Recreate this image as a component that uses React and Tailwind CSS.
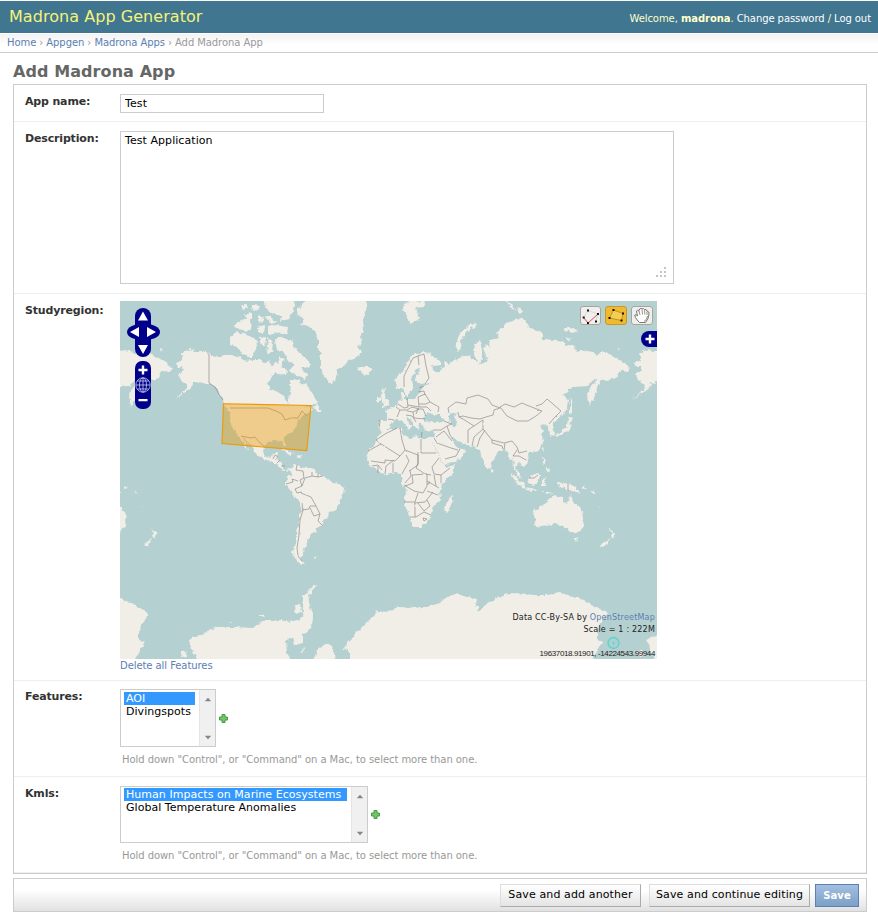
import React from "react";

const LAND = [
  // North and Central America
  "M190 349 L196 351 L203 351 L209 354 L215 357 L220 356 L226 355 L233 355 L240 357 L247 361 L254 360 L260 360 L264 363 L268 362 L273 366 L278 361 L280 356 L284 360 L281 367 L286 370 L286 376 L280 375 L276 373 L272 376 L268 383 L271 389 L277 392 L283 395 L286 401 L288 404 L289 398 L291 393 L290 387 L290 379 L294 379 L300 381 L302 385 L306 383 L309 389 L313 394 L318 402 L312 405 L305 407 L311 408 L313 410 L308 413 L303 415 L299 421 L297 426 L292 432 L284 437 L284 441 L287 447 L284 447 L281 441 L274 440 L267 442 L264 446 L263 452 L266 457 L271 458 L273 453 L278 453 L276 458 L277 461 L283 463 L282 468 L286 470 L291 469 L288 472 L281 469 L277 464 L272 461 L263 459 L257 455 L253 448 L246 440 L243 438 L249 449 L247 449 L242 442 L240 438 L237 433 L232 427 L230 420 L230 413 L225 406 L224 402 L220 393 L215 387 L208 384 L198 382 L193 383 L192 388 L183 394 L174 399 L181 394 L187 388 L187 384 L180 380 L178 375 L184 370 L183 367 L178 367 L176 363 L183 360 L181 353 Z",
  // Greenland
  "M307 300 L303 303 L300 307 L297 311 L298 316 L304 319 L301 325 L310 327 L315 331 L318 340 L318 348 L322 354 L320 358 L320 367 L325 378 L332 384 L335 381 L338 369 L344 366 L348 361 L357 358 L361 352 L357 346 L362 344 L360 338 L364 331 L363 320 L366 312 L367 300 Z",
  // Iceland
  "M358 368 L362 366 L368 366 L372 370 L366 375 L361 373 Z",
  // Baffin and the Arctic islands
  "M275 340 L280 337 L291 340 L294 347 L303 355 L310 363 L309 368 L303 366 L301 370 L307 374 L306 379 L299 376 L289 371 L294 365 L289 361 L284 353 L277 350 Z",
  "M263 300 L295 300 L293 310 L289 319 L281 321 L282 316 L273 314 L265 307 Z",
  "M268 327 L275 325 L288 327 L287 334 L268 333 Z",
  "M265 316 L272 318 L277 322 L270 324 Z",
  "M257 327 L265 325 L264 334 L258 332 Z M245 313 L252 313 L252 320 L246 321 Z M252 305 L260 306 L258 311 L252 309 Z M258 315 L264 317 L262 322 L258 321 Z M241 306 L246 303 L248 308 L243 310 Z",
  "M230 337 L237 332 L247 335 L258 340 L257 350 L250 358 L242 354 L238 347 L230 345 Z",
  "M233 327 L242 320 L248 317 L253 327 L247 332 L237 328 Z",
  "M259 338 L266 337 L265 347 L259 344 Z M268 337 L273 342 L272 352 L267 354 L268 346 Z",
  "M281 367 L287 370 L286 375 L280 373 Z",
  "M314 407 L317 403 L319 407 L322 412 L316 412 Z",
  // Caribbean
  "M281 450 L288 450 L295 454 L290 455 Z M297 455 L303 457 L297 458 Z",
  // South America
  "M290 469 L294 466 L297 465 L300 467 L305 468 L312 468 L315 472 L323 475 L327 480 L333 482 L341 485 L345 488 L344 493 L340 500 L339 506 L337 509 L329 513 L327 518 L323 523 L319 528 L315 527 L317 532 L310 535 L310 538 L306 540 L307 545 L304 549 L303 554 L300 558 L305 564 L298 563 L295 558 L293 552 L296 543 L298 525 L300 513 L301 503 L295 498 L290 490 L286 485 L287 478 L292 475 Z",
  "M313 556 L316 557 L314 559 Z",
  // Europe and Asia
  "M395 380 L397 375 L403 372 L407 363 L413 355 L423 352 L429 353 L434 357 L441 361 L441 365 L434 366 L431 364 L433 370 L438 373 L440 368 L445 366 L444 362 L450 364 L452 361 L463 357 L470 355 L472 360 L477 362 L474 354 L475 344 L480 340 L482 350 L482 359 L478 365 L485 363 L487 358 L484 351 L485 344 L489 347 L490 340 L499 338 L496 333 L503 328 L507 323 L520 318 L525 320 L527 326 L533 330 L542 332 L542 339 L553 340 L563 342 L565 346 L572 345 L578 352 L583 350 L592 352 L597 355 L600 353 L607 353 L615 357 L625 363 L630 368 L627 372 L620 371 L617 378 L607 381 L601 379 L597 388 L594 398 L589 406 L587 397 L590 388 L597 380 L593 380 L588 386 L573 387 L563 395 L568 400 L567 409 L561 416 L552 423 L554 434 L550 436 L549 428 L545 424 L540 427 L545 430 L541 434 L544 440 L540 449 L532 453 L527 453 L528 463 L523 467 L518 463 L516 466 L518 472 L522 478 L518 476 L514 468 L513 458 L510 460 L508 452 L503 449 L499 452 L492 462 L490 469 L487 470 L482 456 L479 451 L475 447 L467 445 L460 442 L452 437 L453 443 L458 447 L465 450 L462 457 L452 462 L444 465 L441 460 L435 447 L432 440 L434 435 L433 430 L425 431 L422 424 L420 423 L419 430 L415 428 L410 419 L406 417 L409 423 L412 426 L409 430 L403 422 L398 419 L392 421 L390 428 L383 431 L378 429 L378 420 L388 420 L388 413 L384 410 L389 409 L396 406 L398 401 L402 399 L401 393 L404 393 L404 399 L415 399 L419 393 L424 386 L432 383 L418 384 L415 378 L420 369 L416 369 L412 378 L413 385 L410 393 L406 396 L403 388 L397 388 Z",
  // British Isles
  "M381 389 L385 388 L384 393 L387 400 L390 404 L387 407 L381 408 L384 404 L382 400 Z M377 398 L382 397 L381 401 L377 403 Z",
  // Africa
  "M382 430 L390 430 L402 428 L403 435 L412 439 L415 435 L422 438 L432 438 L433 443 L437 453 L442 463 L446 467 L455 465 L453 472 L445 482 L440 488 L441 500 L432 508 L431 515 L427 523 L420 527 L413 527 L410 517 L404 502 L407 492 L402 483 L402 475 L395 472 L387 474 L380 473 L373 468 L367 460 L368 450 L376 441 Z",
  "M448 499 L453 495 L452 503 L447 513 L444 510 Z",
  "M491 468 L494 471 L491 473 Z",
  // Svalbard, Novaya Zemlya and the Siberian islands
  "M404 304 L410 301 L425 302 L423 307 L415 308 L420 318 L416 321 L410 323 L407 317 L403 309 Z",
  "M475 322 L477 325 L468 330 L463 337 L460 344 L461 350 L457 351 L456 343 L460 333 L467 327 Z",
  "M506 300 L512 304 L516 311 L511 308 Z M517 308 L523 311 L520 315 Z M564 329 L569 327 L578 331 L572 333 Z M567 338 L572 339 L568 341 Z M617 348 L621 349 L618 350 Z",
  // Sakhalin and Japan
  "M570 397 L572 403 L572 413 L570 414 Z",
  "M568 417 L574 418 L571 422 L569 431 L563 433 L557 437 L555 434 L561 431 L567 426 Z",
  // South East Asia
  "M542 448 L544 449 L542 452 Z M542 457 L545 459 L545 464 L542 463 Z M546 467 L550 470 L549 473 L546 470 Z",
  "M510 473 L514 475 L523 483 L525 488 L518 485 Z M525 488 L538 490 L537 492 L526 490 Z M541 492 L548 492 L554 493 L548 494 Z",
  "M528 478 L537 473 L540 475 L538 483 L534 485 L529 483 Z M542 478 L548 477 L544 480 L547 486 L542 486 Z",
  "M555 481 L561 484 L568 483 L575 487 L580 493 L575 492 L568 491 L565 488 L560 487 Z",
  "M582 486 L586 488 L582 489 Z M592 490 L596 494 L592 492 Z M598 506 L602 509 L600 508 Z",
  // Australia and New Zealand
  "M534 510 L543 506 L548 499 L555 496 L563 497 L563 502 L567 504 L569 500 L571 494 L573 502 L580 508 L584 517 L583 526 L577 533 L570 532 L563 526 L555 523 L547 525 L538 527 L535 525 Z",
  "M573 537 L578 537 L576 542 Z",
  "M609 527 L613 532 L616 533 L612 539 L610 536 L612 534 Z M610 538 L607 544 L603 547 L601 545 Z",
  // Antarctica
  "M188 640 L200 635 L205 632 L217 627 L233 627 L253 628 L262 620 L280 620 L290 622 L302 618 L303 610 L303 597 L313 585 L318 584 L308 595 L310 607 L313 617 L312 627 L303 635 L303 643 L295 645 L293 638 L286 640 L287 653 L290 660 L197 660 L192 649 Z",
  "M295 606 L300 604 L301 612 L296 615 Z M228 620 L233 623 L228 622 Z M260 614 L267 616 L260 617 Z M180 650 L184 650 L187 656 L182 657 Z M300 652 L305 647 L303 652 Z",
  "M313 660 L317 650 L327 643 L333 647 L335 660 Z",
  "M350 660 L350 652 L343 648 L353 638 L359 630 L367 622 L374 615 L378 611 L387 612 L393 609 L400 607 L413 608 L430 606 L440 603 L447 597 L458 593 L463 596 L477 599 L476 605 L479 612 L484 606 L490 602 L503 595 L518 593 L533 595 L547 595 L560 593 L577 597 L593 605 L607 613 L602 620 L597 630 L597 640 L603 642 L597 650 L593 660 Z",
];

const WATER = [
  "M424 417 L428 412 L434 415 L439 415 L445 420 L439 423 L430 421 L424 422 Z",
  "M449 414 L457 412 L454 417 L457 421 L456 427 L451 427 L449 420 Z",
  "M427 481 L430 481 L430 484 L427 484 Z",
];

const BORDERS = [
  "M209 354 V383 L215 387 L220 396 L223 400",
  "M230 408 H268 L276 411 L282 414 L285 420 L291 418 L298 418 L302 411 L307 416",
  "M241 436 L251 438 L255 437 L260 443 L264 446 M273 459 L275 455 L278 457 M277 463 L280 460 M282 466 L285 466",
  "M297 465 L296 470 L303 471 L304 478 L300 480 L302 486 L295 489 L297 493 L302 492 M286 484 L293 482 L292 479 L298 481 M302 486 L305 478 L312 476 L312 472 M312 476 L318 477 L318 473 M318 477 L323 476",
  "M301 493 L311 497 L316 506 L310 506 L309 509 L302 510 M316 506 L320 514 L314 516 L310 508 M320 514 L318 521 L323 526 M302 503 L303 510 L300 520 L299 535 L297 548 L298 556 L302 561",
  "M404 387 L404 376 L408 368 L413 358 L418 356 L419 365 M418 356 L424 354 L426 366 L429 378 L425 384 M419 388 L424 386 M418 392 L424 391 L425 395",
  "M407 398 L408 407 L404 408 L398 404 M408 405 L419 407 L418 397 L425 394 L430 402 L426 404 L419 404 M419 407 L427 407 L431 411 M430 402 L439 407 L438 412 M396 407 L400 410 L397 417 M400 410 L407 410 L412 407 L419 409 L413 412 L407 411 M406 415 L412 416 L416 422 M413 412 L414 418 L425 419 M416 414 L418 409 L423 409 L426 416 M378 421 L380 421 L379 429 M388 419 L394 420",
  "M449 413 L448 408 L456 402 L466 404 L467 398 L478 395 L488 399 L492 405 L500 408 L494 410 L493 415 L486 417 L480 419 L471 418 L463 416 L459 417 L458 412",
  "M500 407 L505 404 L514 407 L522 403 L529 406 L542 411 L536 416 L528 421 L517 421 L507 416 Z M542 404 L547 399 L553 404 L561 411 L554 418 L549 424 M542 404 L536 406",
  "M459 417 L463 419 L474 426 L483 420 L483 429 L492 440 L504 443 L512 441 L517 447 L519 453 L527 451 M474 426 L468 430 L468 443 M483 429 L474 437 L472 446 M485 430 L480 438 L477 447 M492 440 L492 443 L502 446 L503 449 M505 443 L504 450 M517 450 L513 456 L519 456 L526 460",
  "M444 421 L451 424 L447 426 M433 430 L441 430 L447 426 L450 435 L453 439 M436 437 L444 431 L448 436 L452 441 M434 438 L437 443 L451 448 L458 450 M445 459 L456 456 L460 449 M422 432 L421 438",
  "M368 451 L381 444 L400 456 L395 461 L385 460 L385 463 L371 461 M381 444 L376 440 L385 434 L397 428 M400 428 L402 440 L405 450 L400 456 M405 450 L418 455 L418 465 L409 471 M421 439 V453 H436 M418 452 L418 463 L416 468 L425 474 L431 475 M439 458 L432 467 L434 474 L441 475 L450 468 M372 466 L378 465 L382 470 M378 473 V466 M385 474 L386 466 L394 460 M393 473 V463 M402 474 L409 461 L406 455",
  "M405 483 L411 476 L410 470 M404 485 L414 491 L423 493 L427 486 L427 474 L412 475 L413 483 L405 486 M427 481 L439 488 M427 491 L438 495 M404 502 H415 L418 493 M414 503 L425 502 L433 492 M415 503 V517 M410 517 H416 L424 512 L431 515 M418 503 L424 511 L430 506 L427 500 M434 475 L436 486 M423 518 L427 519 L424 521 Z M441 475 V483",
  "M568 483 V491 M529 478 L534 478 L538 475",
];

function WorldMap() {
  return (
    <svg className="block" width="537" height="358" viewBox="120 301 537 358">
      <defs>
        <filter id="coast" filterUnits="userSpaceOnUse" x="-400" y="290" width="1600" height="380" colorInterpolationFilters="sRGB">
          <feTurbulence type="fractalNoise" baseFrequency="0.22" numOctaves="2" seed="4" result="n" />
          <feDisplacementMap in="SourceGraphic" in2="n" scale="5" xChannelSelector="R" yChannelSelector="G" />
        </filter>
        <filter id="frontier" filterUnits="userSpaceOnUse" x="-400" y="290" width="1600" height="380" colorInterpolationFilters="sRGB">
          <feTurbulence type="fractalNoise" baseFrequency="0.22" numOctaves="1" seed="4" result="n" />
          <feDisplacementMap in="SourceGraphic" in2="n" scale="2" xChannelSelector="R" yChannelSelector="G" />
        </filter>
        <g id="land">
          <path d={LAND.join(" ")} fill="#f1eee8" />
          <path d={WATER.join(" ")} fill="#b5d0d0" />
        </g>
        <path id="borders" d={BORDERS.join(" ")} fill="none" stroke="#8f8d8b" strokeWidth="0.7" />
      </defs>
      <rect x="120" y="301" width="537" height="358" fill="#b5d0d0" />
      <g filter="url(#coast)">
        <use href="#land" />
        <use href="#land" x="-458" />
        <use href="#land" x="458" />
      </g>
      <use href="#borders" filter="url(#frontier)" />
      <path d="M223.500 403.700 L311 405.500 L306.800 450.600 L222 443.500 Z" fill="#ee9900" fillOpacity="0.4" stroke="#ee9900" strokeWidth="1.1" />

      {/* Pan control */}
      <g fill="#00008b">
        <rect x="135" y="308" width="16" height="49" rx="8" />
        <ellipse cx="143.500" cy="332" rx="16.500" ry="8.500" />
        <rect x="135" y="361" width="16" height="48" rx="7" />
      </g>
      <g fill="#fff">
        <path d="M143 311.500 L148 320.500 H138 Z M143 354 L138 345 H148 Z M130 332 L139 327 V337 Z M156 332 L147 327 V337 Z" />
        <path d="M138.500 368.800 H147.500 V371.200 H138.500 Z M141.800 365.500 H144.200 V374.500 H141.800 Z M138.500 399 H147.500 V401.300 H138.500 Z" />
      </g>
      <g fill="none" stroke="#c9c9ee" strokeWidth="0.8">
        <circle cx="143" cy="385" r="7.200" />
        <ellipse cx="143" cy="385" rx="3.500" ry="7.200" />
        <path d="M143 378 V392 M136 385 H150 M137.500 381 H148.500 M137.500 389 H148.500" />
      </g>

      {/* Drawing tools */}
      <g stroke="#aaa59b">
        <rect x="580.500" y="306.500" width="20" height="18" rx="2.500" fill="#efefed" />
        <rect x="605.500" y="306.500" width="21" height="18" rx="2.500" fill="#f1ba2e" stroke="#c79a2c" />
        <rect x="631.500" y="306.500" width="21" height="18" rx="2.500" fill="#efefed" />
      </g>
      <path d="M583.500 317.500 L588 310.500 L598 314" fill="none" stroke="#d2d2d2" strokeWidth="0.8" />
      <path d="M583.500 317.500 L588 323 L598 314" fill="none" stroke="#e8485a" />
      <path d="M598 314 L596 321" stroke="#ccc" strokeWidth="0.7" />
      <path d="M582.700 316.500h2v2h-2z M587 309.500h2v2h-2z M597 313h2v2h-2z M587 322h2v2h-2z M595 320.500h2v2h-2z" fill="#111" />
      <path d="M613.500 310 L623 313.500 L621.500 320.500 L609.500 318 Z" fill="#f5ce50" stroke="#9d8126" strokeWidth="0.7" />
      <path d="M612.500 309h2v2h-2z M622 312.500h2v2h-2z M620.500 319.500h2v2h-2z M608.500 317h2v2h-2z" fill="#111" />
      <path d="M638 321 Q634.500 317 634.800 315 Q636 314 637.500 316 L636.500 311 Q637.500 309.500 638.800 311 L639.500 309 Q641 307.800 642 309 Q643.500 308 644.500 309.500 Q646.500 309 647 311 Q649.500 311.500 649 314 Q648.500 319 645.500 322.500 H639.500 Z" fill="#fff" stroke="#6c6960" strokeWidth="0.9" />
      <path d="M639 311 L640 315 M642 309.500 L642.500 314.500 M644.600 310 L644.800 314.500 M647 311.500 L647 315 M647.500 316 Q647 320 644 321.500" fill="none" stroke="#77746a" strokeWidth="0.8" />

      {/* Layer switcher */}
      <path d="M657 331 H649 A8 8 0 0 0 649 347 H657 Z" fill="#00008b" />
      <path d="M645.500 337.800 H654.500 V340.200 H645.500 Z M648.800 334.500 H651.200 V343.500 H648.800 Z" fill="#fff" />

      {/* Cursor marker */}
      <circle cx="613.500" cy="643" r="5.500" fill="#8bd6d4" fillOpacity=".4" stroke="#5fcfcf" strokeWidth="1.300" />
      <circle cx="613.500" cy="643" r="0.800" fill="#5fb5b5" />
    </svg>
  );
}

function Row({ label, className, labelClass = "", children }) {
  return (
    <div className={"flex border-b border-[#eee] pl-[11px] " + className}>
      <label className={"w-[95px] shrink-0 text-[11px] leading-[15px] font-bold tracking-[-0.16px] text-[#333] " + labelClass}>{label}</label>
      <div className="min-w-0">{children}</div>
    </div>
  );
}

function ListBox({ className, padding, options }) {
  return (
    <div className={"flex border border-[#ccc] bg-white text-[11px] leading-[13px] tracking-[0.04px] " + className}>
      <div className={"min-w-0 grow pr-1 pl-[3px] text-black " + padding}>
        {options.map(([name, cls]) => (
          <div key={name} className={"h-[13px] pl-[2px] whitespace-nowrap " + cls}>{name}</div>
        ))}
      </div>
      <div className="flex w-4 shrink-0 flex-col items-center justify-between border-l border-[#e4e4e4] bg-[#f0f0f0] pt-[7px] pb-[6px]">
        <svg width="8" height="5" viewBox="0 0 8 5"><path d="M4 0.800 L7.200 4.300 H0.800 Z" fill="#858585" /></svg>
        <svg width="8" height="5" viewBox="0 0 8 5"><path d="M4 4.200 L0.800 0.700 H7.200 Z" fill="#858585" /></svg>
      </div>
    </div>
  );
}

function AddIcon() {
  return (
    <svg className="ml-[3px]" width="9" height="9" viewBox="0 0 9 9">
      <path d="M3 0.500 H6 V3 H8.500 V6 H6 V8.500 H3 V6 H0.500 V3 H3 Z" fill="#72c468" stroke="#459b45" />
    </svg>
  );
}

function HelpText() {
  return (
    <p className="mt-[6px] ml-[2px] text-[10px] leading-[14px] tracking-[-0.06px] whitespace-nowrap text-[#999]">
      Hold down "Control", or "Command" on a Mac, to select more than one.
    </p>
  );
}

export default function App() {
  return (
    <div className="h-[916px] w-[878px] overflow-hidden bg-white pt-px font-['DejaVu_Sans',Verdana,sans-serif] text-[11px] text-[#333]">
      <header className="flex h-8 items-center justify-between bg-[#417690] pr-[7px] pl-[9px]">
        <h1 className="text-[16px] leading-8 tracking-[0.05px] whitespace-nowrap text-[#f4f379]">Madrona App Generator</h1>
        <div className="pt-[3px] text-[10px] tracking-[-0.07px] whitespace-nowrap text-[#ffffcc]">
          Welcome, <b>madrona</b>. <a className="text-white">Change password</a> / <a className="text-white">Log out</a>
        </div>
      </header>
      <nav className="mt-px h-[19px] border-b border-[#ccc] bg-linear-to-b from-[#f2f2f2] to-white to-60% pl-[7px] text-[10px] leading-[18px] tracking-[-0.08px] whitespace-nowrap text-[#999]">
        <a className="text-[#5b80b2]">Home</a> › <a className="text-[#5b80b2]">Appgen</a> › <a className="text-[#5b80b2]">Madrona Apps</a> › Add Madrona App
      </nav>
      <main className="px-[13px] pr-[11px]">
        <h2 className="h-[31px] pt-[9px] text-[16px] leading-5 font-bold tracking-[0.08px] whitespace-nowrap text-[#666]">Add Madrona App</h2>
        <section className="h-[790px] border border-[#ccc]">
          <Row label="App name:" className="h-[37px] pt-[9px]">
            <input readOnly defaultValue="Test" className="block h-[19px] w-[204px] border border-[#ccc] px-1 text-[11px] tracking-[0.1px] text-black" />
          </Row>
          <Row label="Description:" className="h-[172px] pt-[9px]">
            <div className="flex h-[153px] w-[554px] flex-col justify-between border border-[#ccc] px-1 py-[2px] text-[11px] leading-[13px] tracking-[0.06px] text-black">
              <span>Test Application</span>
              <svg className="mr-[3px] mb-[4px] self-end" width="10" height="10" viewBox="0 0 10 10">
                <path d="M8 0h2v2h-2z M4 4h2v2h-2z M8 4h2v2h-2z M0 8h2v2h-2z M4 8h2v2h-2z M8 8h2v2h-2z" fill="#c4c4c4" />
              </svg>
            </div>
          </Row>
          <Row label="Studyregion:" labelClass="pt-[2px]" className="h-[387px] pt-[7px]">
            <div className="relative h-[358px] w-[537px] overflow-hidden">
              <WorldMap />
              <div className="absolute top-[311px] right-[2px] text-right text-[8px] leading-3 tracking-[0.2px] whitespace-nowrap text-[#222]">
                <div>Data CC-By-SA by <a className="text-[#5b80b2]">OpenStreetMap</a></div>
                <div>Scale = 1 : 222M</div>
              </div>
              <div className="absolute right-[2px] bottom-0 font-['Liberation_Sans',Arial,sans-serif] text-[8px] leading-[10px] tracking-[-0.38px] whitespace-nowrap text-[#222]">19637018.91901, -14224543.99944</div>
            </div>
            <a className="block text-[10px] leading-[14px] tracking-[-0.07px] text-[#5b80b2]">Delete all Features</a>
          </Row>
          <Row label="Features:" className="h-[96px] pt-[8px]">
            <div className="flex items-center">
              <ListBox className="h-[58px] w-[96px]" padding="pt-[2px]" options={[["AOI", "bg-[#3399ff] text-white"], ["Divingspots", ""]]} />
              <AddIcon />
            </div>
            <HelpText />
          </Row>
          <Row label="Kmls:" className="h-[96px] pt-[9px]">
            <div className="flex items-center">
              <ListBox className="h-[57px] w-[248px]" padding="pt-px" options={[["Human Impacts on Marine Ecosystems", "bg-[#3399ff] text-white"], ["Global Temperature Anomalies", ""]]} />
              <AddIcon />
            </div>
            <HelpText />
          </Row>
        </section>
        <div className="mt-1 flex h-[34px] items-center justify-end border border-[#ccc] bg-linear-to-b from-white from-35% to-[#e1e1e1] pr-[7px] text-[11px] tracking-[0.12px] whitespace-nowrap text-black">
          <button className="h-[23px] w-[141px] border border-[#aaa] border-t-[#ddd] border-l-[#ddd] bg-linear-to-b from-white to-[#e4e4e4]">Save and add another</button>
          <button className="ml-2 h-[23px] w-[161px] border border-[#aaa] border-t-[#ddd] border-l-[#ddd] bg-linear-to-b from-white to-[#e4e4e4]">Save and continue editing</button>
          <button className="ml-[5px] h-[23px] w-[44px] border border-[#5b80b2] bg-linear-to-b from-[#a3bfe0] to-[#7ca0c7] text-[10px] font-bold text-white">Save</button>
        </div>
      </main>
    </div>
  );
}
